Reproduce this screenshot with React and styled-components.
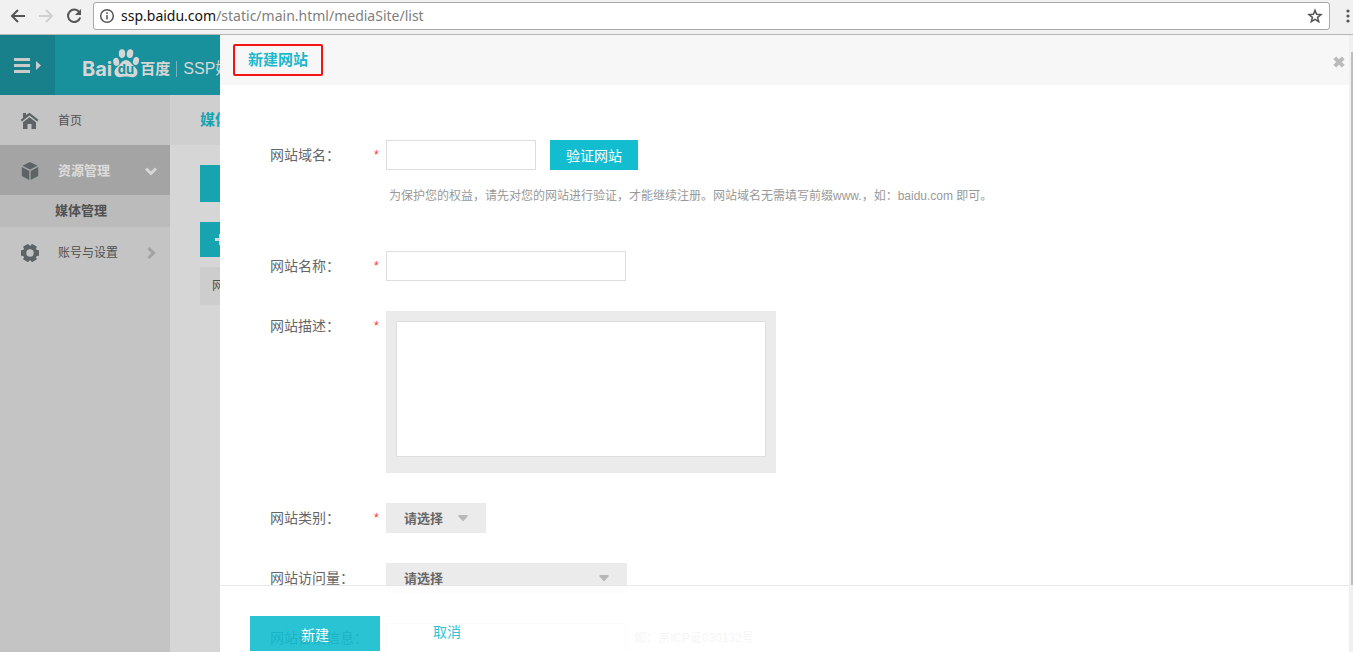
import React, { useState } from "react";
import styled, { createGlobalStyle, css } from "styled-components";

const TEAL = "#13bdd0";
const DIM_TEAL = "#18919c";
const DIM_BUTTON = "#18a3b1";
const PANEL_LEFT = "220px";

const GlobalStyle = createGlobalStyle`
  * {
    box-sizing: border-box;
  }

  body {
    margin: 0;
    overflow: hidden;
    color: #666;
    font: 14px/20px "Liberation Sans", "Noto Sans CJK SC", sans-serif;
  }

  button, input, select, textarea {
    margin: 0;
    font-family: inherit;
    border-radius: 0;
  }

  a {
    color: inherit;
    text-decoration: none;
  }
`;

const Page = styled.div`
  display: flex;
  flex-direction: column;
  height: 100vh;
`;

// browser bar

const BrowserBar = styled.div`
  display: flex;
  flex: none;
  align-items: center;
  height: 35px;
  padding: 0 0 2px 9px;
  background: #f1f1f1;
  border-bottom: 1px solid #b6b6b6;
`;

const NavButton = styled.button`
  display: grid;
  place-items: center;
  flex: none;
  width: 28px;
  height: 28px;
  padding: 0 10px 0 0;
  color: ${p => (p.$faded ? "#d0d0d0" : "#555")};
  background: none;
  border: 0;
`;

const AddressBar = styled.div`
  display: flex;
  flex: 1;
  align-items: center;
  gap: 6px;
  height: 28px;
  padding: 0 6px 0 5px;
  color: #808080;
  font: 14px/20px "Noto Sans", "Open Sans", sans-serif;
  background: #fff;
  border: 1px solid #a9a9a9;
  border-radius: 3px;
`;

const Url = styled.span`
  flex: 1;

  b {
    color: #111;
    font-weight: 400;
  }
`;

const MenuButton = styled(NavButton)`
  width: 23px;
  padding: 0 0 0 12px;
`;

// page behind the panel

const Stage = styled.div`
  position: relative;
  flex: 1;
  min-height: 0;
  overflow: hidden;
  background: #d6d6d6;
`;

const Backdrop = styled.div`
  display: flex;
  flex-direction: column;
  height: 100%;
`;

const TopBar = styled.header`
  display: flex;
  flex: none;
  align-items: center;
  height: 60px;
  color: #d6d6d6;
  background: ${DIM_TEAL};
`;

const SidebarToggle = styled.button`
  display: grid;
  place-items: center;
  width: 55px;
  height: 60px;
  padding: 2px 0 0;
  color: #cacaca;
  background: #17808a;
  border: 0;
`;

const Brand = styled.a`
  display: flex;
  align-items: center;
  height: 60px;
  padding: 8px 0 0 27px;
  white-space: nowrap;
`;

const BrandWord = styled.span`
  font: 700 ${p => p.$size}/24px "Inter", "Noto Sans CJK SC", sans-serif;
`;

const Paw = styled.svg`
  flex: none;
  width: 28px;
  height: 32px;
  margin-bottom: 12px;
`;

const Product = styled.span`
  margin-left: 6px;
  padding-left: 6px;
  font-size: 16px;
  line-height: 16px;
  border-left: 1px solid #74b5bc;
`;

const Columns = styled.div`
  display: flex;
  flex: 1;
  min-height: 0;
`;

const Sidebar = styled.nav`
  flex: none;
  width: 170px;
  background: #c4c4c4;
`;

const SideItem = styled.a`
  display: grid;
  grid-template-columns: 20px 1fr 14px;
  align-items: center;
  column-gap: 18px;
  height: 50px;
  padding: 2px 12px 0 20px;
  color: #505050;
  font-size: 12px;

  svg:last-child {
    color: #a3a3a3;
  }

  svg:first-child {
    color: #5e6366;
  }

  ${p =>
    p.$open &&
    css`
      color: #dcdcdc;
      font-size: 13px;
      font-weight: 700;
      background: #a4a4a4;

      svg:last-child {
        color: #d6d6d6;
      }
    `}
`;

const SubItem = styled.a`
  display: block;
  padding-left: 55px;
  color: #505050;
  font-size: 13px;
  font-weight: 700;
  line-height: 32px;
  background: #bbb;
`;

const Main = styled.main`
  flex: 1;
`;

const MainTitle = styled.h1`
  margin: 0;
  padding-left: 30px;
  color: ${DIM_BUTTON};
  font-size: 15px;
  line-height: 50px;
  background: #cfcfcf;
`;

const MainBody = styled.div`
  display: grid;
  justify-items: start;
  padding: 20px 30px;
`;

const Tab = styled.button`
  width: 120px;
  height: 37px;
  margin-bottom: 20px;
  background: ${DIM_BUTTON};
  border: 0;
`;

const AddButton = styled.button`
  display: flex;
  align-items: center;
  width: 120px;
  height: 35px;
  margin-bottom: 10px;
  padding: 0 15px;
  color: #d6d6d6;
  background: ${DIM_BUTTON};
  border: 0;
`;

const SiteTable = styled.table`
  width: 100%;
  color: #505050;
  background: #cdcdcd;
  border-collapse: collapse;

  th {
    height: 38px;
    padding: 0 12px;
    font-size: 12px;
    font-weight: 400;
    text-align: left;
  }
`;

// slide-over panel

const Panel = styled.section`
  position: absolute;
  top: 0;
  right: 0;
  bottom: 0;
  left: ${PANEL_LEFT};
  display: flex;
  background: #fff;
`;

const PanelContent = styled.div`
  position: relative;
  flex: 1;
  min-width: 0;
  overflow: hidden;
`;

const PanelHeader = styled.header`
  display: flex;
  align-items: center;
  justify-content: space-between;
  height: 50px;
  padding: 0 4px 0 13px;
  background: #f7f7f7;
`;

const PanelTitle = styled.h2`
  margin: 0;
  padding: 0 13px;
  color: #1cb8cb;
  font-size: 15px;
  line-height: 28px;
  border: 2px solid #f01414;
  border-radius: 2px;
`;

const CloseButton = styled.button`
  display: grid;
  place-items: center;
  height: 20px;
  margin-top: 4px;
  padding: 0;
  color: #bbb;
  background: none;
  border: 0;
`;

const Form = styled.form`
  display: grid;
  gap: 30px;
  padding: 55px 50px 0;
`;

const Row = styled.div`
  display: grid;
  grid-template-columns: 104px 12px 1fr;
  align-items: start;
`;

const Label = styled.label`
  line-height: 30px;
  white-space: nowrap;
`;

const Required = styled.span`
  color: #f33;
  font-size: 12px;
  line-height: 30px;
`;

const Controls = styled.div`
  display: flex;
  align-items: center;
  gap: ${p => p.$gap || "14px"};
`;

const TextInput = styled.input`
  width: ${p => p.$width || "240px"};
  height: 30px;
  padding: 0 8px;
  font-size: 14px;
  background: #fff;
  border: 1px solid #ddd;
`;

const VerifyButton = styled.button`
  height: 30px;
  padding: 0 16px;
  color: #fff;
  font-size: 14px;
  background: ${TEAL};
  border: 0;
`;

const Hint = styled.p`
  margin: 16px 0 15px 3px;
  color: #999;
  font-size: 12px;
`;

const Example = styled.span`
  color: #999;
  font-size: 12px;
`;

const TextAreaFrame = styled.div`
  width: 390px;
  padding: 10px 10px 16px;
  background: #ebebeb;
`;

const TextArea = styled.textarea`
  display: block;
  width: 100%;
  height: 136px;
  padding: 8px;
  font-size: 14px;
  background: #fff;
  border: 1px solid #ddd;
  resize: none;
`;

const SelectFrame = styled.div`
  position: relative;
  width: ${p => p.$width};

  svg {
    position: absolute;
    top: 12px;
    right: 18px;
    pointer-events: none;
  }
`;

const Select = styled.select`
  display: block;
  width: 100%;
  height: 30px;
  padding: 0 18px;
  color: #666;
  font-size: 13px;
  font-weight: 700;
  background: #ebebeb;
  border: 0;
  appearance: none;
`;

const PanelFooter = styled.footer`
  position: absolute;
  right: 0;
  bottom: 0;
  left: 0;
  display: flex;
  align-items: flex-start;
  gap: 2px;
  height: 67px;
  padding: 30px 30px 0;
  background: #fff;
  border-top: 1px solid #e6e6e6;
  opacity: 0.9;
`;

const FooterButton = styled.button`
  width: 130px;
  height: ${p => (p.$primary ? "35px" : "30px")};
  padding: 0;
  color: ${p => (p.$primary ? "#fff" : TEAL)};
  font-size: 14px;
  background: ${p => (p.$primary ? TEAL : "transparent")};
  border: 0;
`;

const Scrollbar = styled.div`
  flex: none;
  width: 4px;
  padding: 17px 0 67px 2px;
  background: #f0f0f0;
`;

const Thumb = styled.div`
  height: 100%;
  background: #bfbfbf;
`;

const BackIcon = ({ flip }) => (
  <svg width="16" height="16" viewBox="0 0 16 16" fill="none" stroke="currentColor" strokeWidth="2">
    <path d={flip ? "M1 8h13M8 2l6 6-6 6" : "M15 8H2M8 2L2 8l6 6"} />
  </svg>
);

const ReloadIcon = () => (
  <svg width="16" height="16" viewBox="0 0 16 16" fill="none" stroke="currentColor" strokeWidth="2">
    <path d="M13.5 4.5A6.2 6.2 0 1 0 14.2 9.5" />
    <path d="M15 1v6H9z" fill="currentColor" stroke="none" />
  </svg>
);

const InfoIcon = () => (
  <svg width="16" height="16" viewBox="0 0 16 16" fill="none" stroke="#555" strokeWidth="1.5">
    <circle cx="8" cy="8" r="6.3" />
    <path d="M8 7v4.5M8 4.3v1.7" />
  </svg>
);

const StarIcon = () => (
  <svg width="16" height="16" viewBox="0 0 16 16" fill="none" stroke="#555" strokeWidth="1.5">
    <path d="M8 2.2l1.6 4.1 4.4.3-3.4 2.8 1.1 4.3L8 11.3l-3.7 2.4 1.1-4.3L2 6.6l4.4-.3z" />
  </svg>
);

const DotsIcon = () => (
  <svg width="4" height="14" viewBox="0 0 4 14" fill="currentColor">
    <circle cx="2" cy="2" r="1.6" />
    <circle cx="2" cy="7" r="1.6" />
    <circle cx="2" cy="12" r="1.6" />
  </svg>
);

const ToggleIcon = () => (
  <svg width="28" height="16" viewBox="0 0 28 16" fill="currentColor">
    <path d="M0 0h16v3H0zM0 6h16v3H0zM0 12h16v3H0zM22 3l5 4.5-5 4.5z" />
  </svg>
);

const PawLogo = () => (
  <Paw viewBox="0 0 28 32" fill="currentColor">
    <ellipse cx="4.2" cy="14.8" rx="3" ry="4" transform="rotate(-12 4.2 14.8)" />
    <ellipse cx="10" cy="6.6" rx="3.2" ry="4.4" />
    <ellipse cx="18" cy="6.6" rx="3.2" ry="4.4" transform="rotate(10 18 6.6)" />
    <ellipse cx="24" cy="14" rx="3" ry="4" transform="rotate(12 24 14)" />
    <path d="M14 13c3 0 4.600 2.500 6.300 4.400 2.500 2.600 5.200 4.200 5.200 7.800 0 3.500-2.500 5-5 5-2.600 0-4.200-.6-6.500-.6s-3.900.6-6.500.6c-2.700 0-5-1.700-5-5.100 0-3.500 2.700-5 5.200-7.700C9.400 15.500 11 13 14 13z" />
    <text x="14" y="27" textAnchor="middle" fill={DIM_TEAL} fontFamily="Inter, sans-serif" fontSize="13" fontWeight="700">
      du
    </text>
  </Paw>
);

const HomeIcon = () => (
  <svg width="20" height="18" viewBox="0 0 20 18" fill="currentColor">
    <path d="M3 1h3v2L9.500.8 18.500 7.700l-1.300 1.700L9.500 3.500 1.900 9.400.7 7.700 3 5.900z" />
    <path d="M9.500 5.200l6.500 5V17h-4.500v-5h-4v5H3v-6.800z" />
  </svg>
);

const CubeIcon = () => (
  <svg width="20" height="20" viewBox="0 0 20 20" fill="currentColor">
    <path d="M10 1l7.500 3.800L10 8.600 2.500 4.800zM1.800 6l7.500 3.900v9L1.800 15zM18.200 6l-7.500 3.900v9l7.500-3.900z" />
  </svg>
);

const GearIcon = () => (
  <svg width="20" height="20" viewBox="0 0 20 20">
    <g fill="currentColor">
      {[0, 60, 120].map(angle => (
        <rect key={angle} x="1" y="7" width="18" height="6" rx="1" transform={`rotate(${angle} 10 10)`} />
      ))}
    </g>
    <circle cx="10" cy="10" r="5.500" fill="none" stroke="currentColor" strokeWidth="4" />
    <circle cx="10" cy="10" r="3.700" fill="#c4c4c4" />
  </svg>
);

const Chevron = ({ down }) => (
  <svg width="14" height="14" viewBox="0 0 14 14" fill="none" stroke="currentColor" strokeWidth="3">
    <path d={down ? "M2 4.500l5 5 5-5" : "M4.500 2l5 5-5 5"} />
  </svg>
);

const PlusIcon = () => (
  <svg width="11" height="11" viewBox="0 0 11 11" fill="none" stroke="currentColor" strokeWidth="3">
    <path d="M0 5.500h11M5.500 0v11" />
  </svg>
);

const CloseIcon = () => (
  <svg width="12" height="12" viewBox="0 0 12 12" fill="none" stroke="currentColor" strokeWidth="4">
    <path d="M1.800 1.800l8.400 8.400M10.200 1.800l-8.400 8.400" />
  </svg>
);

const Caret = () => (
  <svg width="10" height="6" viewBox="0 0 10 6" fill="#b8b8b8">
    <path d="M.5 0h9v1.500L5.500 6h-1L.5 1.500z" />
  </svg>
);

const Field = ({ id, label, required, children }) => (
  <Row>
    <Label htmlFor={id}>{label}</Label>
    <Required>{required && "*"}</Required>
    <div>{children}</div>
  </Row>
);

const Dropdown = ({ id, width }) => (
  <SelectFrame $width={width}>
    <Select id={id}>
      <option>请选择</option>
    </Select>
    <Caret />
  </SelectFrame>
);

const Browser = () => (
  <BrowserBar>
    <NavButton aria-label="Back"><BackIcon /></NavButton>
    <NavButton aria-label="Forward" $faded><BackIcon flip /></NavButton>
    <NavButton aria-label="Reload"><ReloadIcon /></NavButton>
    <AddressBar>
      <InfoIcon />
      <Url><b>ssp.baidu.com</b>/static/main.html/mediaSite/list</Url>
      <StarIcon />
    </AddressBar>
    <MenuButton aria-label="Menu"><DotsIcon /></MenuButton>
  </BrowserBar>
);

const Background = () => (
  <Backdrop>
    <TopBar>
      <SidebarToggle aria-label="Toggle sidebar"><ToggleIcon /></SidebarToggle>
      <Brand href="#">
        <BrandWord $size="20px">Bai</BrandWord>
        <PawLogo />
        <BrandWord $size="15px">百度</BrandWord>
        <Product>SSP媒</Product>
      </Brand>
    </TopBar>
    <Columns>
      <Sidebar>
        <SideItem href="#"><HomeIcon />首页</SideItem>
        <SideItem href="#" $open><CubeIcon />资源管理<Chevron down /></SideItem>
        <SubItem href="#">媒体管理</SubItem>
        <SideItem href="#"><GearIcon />账号与设置<Chevron /></SideItem>
      </Sidebar>
      <Main>
        <MainTitle>媒体管理</MainTitle>
        <MainBody>
          <Tab aria-label="网站" />
          <AddButton aria-label="新建网站"><PlusIcon /></AddButton>
          <SiteTable>
            <thead>
              <tr><th>网站</th></tr>
            </thead>
          </SiteTable>
        </MainBody>
      </Main>
    </Columns>
  </Backdrop>
);

const App = () => {
  const [domain, setDomain] = useState("");

  return (
    <Page>
      <GlobalStyle />
      <Browser />
      <Stage>
        <Background />
        <Panel>
          <PanelContent>
            <PanelHeader>
              <PanelTitle>新建网站</PanelTitle>
              <CloseButton aria-label="Close"><CloseIcon /></CloseButton>
            </PanelHeader>
            <Form>
              <Field id="domain" label="网站域名：" required>
                <Controls>
                  <TextInput
                    id="domain"
                    $width="150px"
                    value={domain}
                    onChange={e => setDomain(e.target.value)}
                  />
                  <VerifyButton type="button">验证网站</VerifyButton>
                </Controls>
                <Hint>
                  为保护您的权益，请先对您的网站进行验证，才能继续注册。网站域名无需填写前缀www.，如：baidu.com 即可。
                </Hint>
              </Field>
              <Field id="name" label="网站名称：" required>
                <TextInput id="name" />
              </Field>
              <Field id="description" label="网站描述：" required>
                <TextAreaFrame>
                  <TextArea id="description" />
                </TextAreaFrame>
              </Field>
              <Field id="category" label="网站类别：" required>
                <Dropdown id="category" width="100px" />
              </Field>
              <Field id="traffic" label="网站访问量：">
                <Dropdown id="traffic" width="241px" />
              </Field>
              <Field id="record" label="网站备案信息：">
                <Controls $gap="8px">
                  <TextInput id="record" />
                  <Example>如：京ICP证030132号</Example>
                </Controls>
              </Field>
            </Form>
            <PanelFooter>
              <FooterButton $primary>新建</FooterButton>
              <FooterButton>取消</FooterButton>
            </PanelFooter>
          </PanelContent>
          <Scrollbar>
            <Thumb />
          </Scrollbar>
        </Panel>
      </Stage>
    </Page>
  );
};

export default App;
